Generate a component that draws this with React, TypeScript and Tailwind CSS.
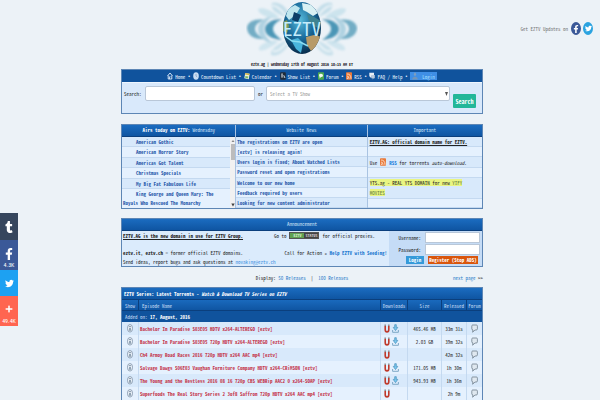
import type { ReactNode } from "react";
import { FaFacebookF, FaTwitter, FaTumblr, FaPlus } from "react-icons/fa";

const airing = ["American Gothic", "American Horror Story", "Americas Got Talent", "Christmas Specials", "My Big Fat Fabulous Life"];

const news = [
  "The registrations on EZTV are open",
  "[eztv] is releasing again!",
  "Users login is fixed; About Watched Lists",
  "Password reset and open registrations",
  "Welcome to our new home",
  "Feedback required by users",
  "Looking for new content administrator",
];

type Episode = { name: string; direct: boolean; size: string; age: string };

const episodes: Episode[] = [
  { name: "Bachelor In Paradise S03E05 HDTV x264-ALTEREGO [eztv]", direct: true, size: "465.46 MB", age: "33m 31s" },
  { name: "Bachelor In Paradise S03E05 720p HDTV x264-ALTEREGO [eztv]", direct: true, size: "2.03 GB", age: "39m 32s" },
  { name: "Ch4 Armoy Road Races 2016 720p HDTV x264 AAC mp4 [eztv]", direct: false, size: "", age: "42m 32s" },
  { name: "Salvage Dawgs S06E03 Vaughan Furniture Company HDTV x264-CRiMSON [eztv]", direct: true, size: "171.05 MB", age: "1h 30m" },
  { name: "The Young and the Restless 2016 08 16 720p CBS WEBRip AAC2 0 x264-SOAP [eztv]", direct: true, size: "943.93 MB", age: "1h 36m" },
  { name: "Superfoods The Real Story Series 2 3of8 Saffron 720p HDTV x264 AAC mp4 [eztv]", direct: false, size: "", age: "2h 9m" },
];

const bar = "bg-linear-to-b from-[#1b6cc0] to-[#0f55a2]";
const stripe = "odd:bg-[#d8e9fb] even:bg-[#e5f1fe]";

function Logo() {
  const wing = (
    <g>
      <path d="M18 20 C6 18 1 24 1 28 C1 34 7 40 18 39 C12 36 9 32 9 29 C9 25 12 22 18 20Z" fill="#4a96b4" opacity=".75" />
      <path d="M36 19 C25 19 19 24 19 29 C19 34 24 39 36 40 C30 36 27 32 27 29 C27 25 30 22 36 19Z" fill="#2f86aa" opacity=".85" />
      <path d="M29 15 C18 17 12 23 12 29 C12 36 18 42 28 44 C21 39 18 34 18 29 C18 24 22 19 29 15Z" fill="#7db8cf" opacity=".55" />
      <path d="M43 13 C38 4 31 1 26 3 C24 8 28 13 40 17Z" fill="#b3d6e4" opacity=".7" />
      <path d="M33 17 C24 9 16 7 12 9 C12 13 18 17 30 19Z" fill="#c4e0eb" opacity=".8" />
      <path d="M42 46 C36 54 30 57 25 55 C24 51 28 46 39 41Z" fill="#b3d6e4" opacity=".6" />
      <path d="M32 42 C24 48 17 52 13 50 C12 45 19 42 29 40Z" fill="#c4e0eb" opacity=".7" />
      <path d="M40 16 C34 7 28 5 26 6 M41 42 C35 50 30 52 27 51" fill="none" stroke="#ffffff" strokeWidth="1.5" opacity=".7" />
    </g>
  );
  return (
    <svg viewBox="0 0 112 60" className="h-[60px] w-[112px]" role="img" aria-label="EZTV">
      <defs>
        <radialGradient id="globe" cx=".45" cy=".35" r=".7">
          <stop offset="0" stopColor="#58bbdb" />
          <stop offset=".5" stopColor="#1b6c9c" />
          <stop offset="1" stopColor="#04223f" />
        </radialGradient>
        <clipPath id="disc">
          <ellipse cx="56" cy="28" rx="19" ry="26" />
        </clipPath>
        <filter id="soft">
          <feGaussianBlur stdDeviation=".9" />
        </filter>
      </defs>
      <g filter="url(#soft)">
        {wing}
        <g transform="translate(112 0) scale(-1 1)">{wing}</g>
      </g>
      <ellipse cx="56" cy="28" rx="19" ry="26" fill="url(#globe)" />
      <g clipPath="url(#disc)">
        <path d="M42 9 L49 5 L54 8 L51 13 L47 17 L43 20 L40 16Z" fill="#bfe6ef" />
        <path d="M56 3 L66 5 L72 13 L67 16 L61 12 L57 10Z" fill="#d9f1f4" />
        <path d="M37 22 L41 20 L43 26 L41 33 L37 31Z" fill="#7c9a58" />
        <path d="M60 37 L68 35 L76 37 L72 46 L65 51 L61 45Z" fill="#b79a67" />
        <path d="M61 14 L68 17 L75 21 L74 29 L68 26 L63 21Z" fill="#3f8391" />
        <path d="M45 40 L52 38 L57 43 L55 53 L50 49Z" fill="#49b5dc" />
        <path d="M48 12 L55 15 L52 22 L46 20Z" fill="#0d3d68" />
        <path d="M39 36 L46 41 L54 42 L62 46" stroke="#8adcf0" strokeWidth="1.5" fill="none" />
      </g>
      <text x="56" y="36" textAnchor="middle" fontSize="19" fontWeight="400" fontFamily="Noto Sans Mono CJK SC, Liberation Sans, sans-serif" fill="#c4ecfb">
        EZTV
      </text>
    </svg>
  );
}

function HomeIcon() {
  return (
    <svg viewBox="0 0 6 8" className="h-2 w-1.5" fill="none" stroke="#e3eefb" strokeWidth=".9">
      <path d="M.5 4 L3 1 L5.5 4 M1.2 3.6 V7 H4.8 V3.6 M2.4 7 V4.8 H3.6" />
    </svg>
  );
}
function ClockIcon() {
  return (
    <svg viewBox="0 0 6 8" className="h-2 w-1.5">
      <ellipse cx="3" cy="4" rx="2.8" ry="3.7" fill="#c9ddf3" />
      <path d="M3 2 V4 L4.2 5" stroke="#7c9cc0" strokeWidth=".7" fill="none" />
    </svg>
  );
}
function CalendarIcon() {
  return (
    <svg viewBox="0 0 6 8" className="h-2 w-1.5">
      <path d="M1.2 1 L5.6 1.8 L4.8 7.2 L.3 6.3Z" fill="#eef3e4" />
      <path d="M1.2 1 L5.6 1.8 L5.4 3.2 L1 2.4Z" fill="#d4b445" />
      <path d="M1.4 4 L4.4 4.6 L4 6.4 L1.1 5.8Z" fill="#7fba62" />
    </svg>
  );
}
function ShowIcon() {
  return (
    <svg viewBox="0 0 6 8" className="h-2 w-1.5">
      <rect x=".2" y=".3" width="5.6" height="7.4" rx=".8" fill="#1e2a38" />
      <path d="M1.2 2 H3 M1.2 4 H3 M2 2 V6 M3.6 5 H5 M3.6 3 L5 6" stroke="#dfe8f2" strokeWidth=".7" />
    </svg>
  );
}
function ForumIcon() {
  return (
    <svg viewBox="0 0 6 8" className="h-2 w-1.5">
      <rect y=".3" width="6" height="7.4" rx=".8" fill="#4ca950" />
      <path d="M1 3 Q1 1.8 3 1.8 Q5 1.8 5 3.4 Q5 5 3 5 L1.6 6.6 V4.8 Q1 4.4 1 3Z" fill="#f2fbf0" />
    </svg>
  );
}
function RssIcon() {
  return (
    <svg viewBox="0 0 6 8" className="inline-block h-2 w-1.5">
      <rect y=".3" width="6" height="7.4" rx=".8" fill="#e8793a" />
      <g fill="none" stroke="#ffe9d8" strokeWidth=".8">
        <path d="M1 4 Q3 4 3 6.8 M1 2 Q5 2 5 6.8" />
      </g>
      <circle cx="1.4" cy="6.2" r=".6" fill="#ffe9d8" />
    </svg>
  );
}
function HelpIcon() {
  return (
    <svg viewBox="0 0 6 8" className="h-2 w-1.5">
      <path d="M.3 .8 H5 V4.6 H2.2 L1 6 V4.6 H.3Z" fill="#e7eef6" />
      <path d="M2.2 3 H5.8 V6.2 H4.8 L3.6 7.6 V6.2 H2.2Z" fill="#b8c9dc" />
    </svg>
  );
}
function UserIcon() {
  return (
    <svg viewBox="0 0 6 8" className="h-2 w-1.5">
      <ellipse cx="3" cy="2.2" rx="1.1" ry="1.8" fill="#7e9dbd" />
      <path d="M0 7.6 Q.4 5 3 4.6 Q5.6 5 6 7.6Z" fill="#7395b8" />
    </svg>
  );
}
function InfoIcon() {
  return (
    <svg viewBox="0 0 6 9" className="h-[9px] w-1.5">
      <ellipse cx="3" cy="4.3" rx="2.5" ry="3.8" fill="#eef4fb" stroke="#7a8ea4" strokeWidth=".8" />
      <path d="M3 3.8 V6.8 M3 2 V3" stroke="#33536f" strokeWidth="1" />
    </svg>
  );
}
function MagnetIcon() {
  return (
    <svg viewBox="0 0 6 9" className="h-[9px] w-1.5" fill="none">
      <path d="M1.2 2 V5.4 Q1.2 7.9 3 7.9 Q4.8 7.9 4.8 5.4 V2" stroke="#bf3a2c" strokeWidth="1.6" />
      <path d="M.4 1.3 H2 M4 1.3 H5.6" stroke="#8f8f93" strokeWidth="1.5" />
    </svg>
  );
}
function DownloadIcon() {
  return (
    <svg viewBox="0 0 7 9" className="h-[9px] w-[7px]">
      <path d="M.6 6 V8.3 H6.4 V6" fill="none" stroke="#7fa9c6" strokeWidth="1" />
      <path d="M2.7 .7 H4.3 V3.4 H5.8 L3.5 6.6 L1.2 3.4 H2.7Z" fill="#7cc8ee" stroke="#3584b4" strokeWidth=".6" />
    </svg>
  );
}
function CommentIcon() {
  return (
    <svg viewBox="0 0 7 9" className="h-[9px] w-[7px]">
      <path d="M1.6 1 H5.4 Q6.4 1 6.4 2.2 V4.8 Q6.4 6 5.2 6 H4 L1.6 8.2 L2 6 Q.8 6 .8 4.8 V2.2 Q.8 1 1.6 1Z" fill="#dfe8f0" stroke="#6f7d8b" strokeWidth=".8" />
    </svg>
  );
}

const menu: { label: string; icon: ReactNode }[] = [
  { label: "Home", icon: <HomeIcon /> },
  { label: "Countdown List", icon: <ClockIcon /> },
  { label: "Calendar", icon: <CalendarIcon /> },
  { label: "Show List", icon: <ShowIcon /> },
  { label: "Forum", icon: <ForumIcon /> },
  { label: "RSS", icon: <RssIcon /> },
  { label: "FAQ / Help", icon: <HelpIcon /> },
];

function ShareBar() {
  return (
    <aside className="fixed top-[213px] left-0 flex w-[18px] flex-col font-['Roboto_Condensed','Roboto','Liberation_Sans',sans-serif] text-[6px] leading-[6px] font-normal text-white">
      <a href="#tumblr" aria-label="Tumblr" className="flex h-[27px] items-center justify-center bg-[#36465d]">
        <FaTumblr className="h-3 w-2" />
      </a>
      <a href="#facebook" className="flex h-[30px] flex-col items-center justify-end gap-px bg-[#3b5998] pb-0.5">
        <FaFacebookF className="h-3 w-2" />
        <span className="mt-px">4.3K</span>
      </a>
      <a href="#twitter" aria-label="Twitter" className="flex h-[26px] items-center justify-center bg-[#1da1f2]">
        <FaTwitter className="size-[9px]" />
      </a>
      <a href="#more" className="flex h-[30px] flex-col items-center justify-end gap-1 bg-[#ff6550] pb-0.5">
        <FaPlus className="size-2" />
        <span className="mt-px">49.4K</span>
      </a>
    </aside>
  );
}

function SearchPanel() {
  return (
    <section className="border border-[#5d86b5] bg-[#d9e9fb]">
      <nav className="flex h-3 items-center justify-center gap-[3px] bg-[#10539d] text-[#eaf3fd]">
        {menu.map((m) => (
          <span key={m.label} className="flex items-center gap-[3px]">
            <a href="#menu" className="flex items-center gap-0.5">
              {m.icon}
              {m.label}
            </a>
            <span className="font-['Liberation_Sans',sans-serif]">•</span>
          </span>
        ))}
        <a href="#login" className="flex h-2 items-center gap-1 bg-[#3f8fe6] px-0.5 text-[#a8e0ff]">
          <UserIcon />
          Login
        </a>
      </nav>
      <form className="flex h-[31px] items-start gap-[3px] border-t border-[#eef6ff] pt-[3px] pr-1.5 pl-0.5">
        <label htmlFor="q" className="pt-[3px]">Search:</label>
        <input id="q" className="h-[15px] min-w-0 flex-[105] rounded-xs border border-[#b9c7d8] bg-white px-1" />
        <label htmlFor="show" className="pt-[3px]">or</label>
        <span className="relative flex min-w-0 flex-[192]">
          <select id="show" className="h-[15px] w-full appearance-none rounded-xs border border-[#b9c7d8] bg-white px-[3px] text-[#999]">
            <option>Select a TV Show</option>
          </select>
          <svg viewBox="0 0 3 4" aria-hidden="true" className="pointer-events-none absolute top-1.5 right-0.5 h-1 w-[3px]">
            <path d="M0 0 H3 L1.5 4Z" fill="#555" />
          </svg>
        </span>
        <button type="button" className="mt-2 h-[14px] w-[23px] rounded-[1px] bg-[#22b799] text-center text-[6px] font-bold text-white">
          Search
        </button>
      </form>
    </section>
  );
}

function NewsPanel() {
  const head = `h-3 border-b border-[#0b3f7d] text-center font-medium text-[#cfe2f7] ${bar}`;
  return (
    <section className="mt-[10px] grid h-[85px] grid-cols-[115fr_132fr_115fr] border border-[#5d86b5] text-[#2b5bab]">
      <div className="border-r border-[#a9c3e2]">
        <h2 className={head}>
          <b className="text-white">Airs today on EZTV:</b> Wednesday
        </h2>
        <div className="flex">
          <ul className="flex h-[71px] flex-1 flex-col font-bold">
            {airing.map((s) => (
              <li key={s} className={`flex-1 border-b border-[#c4d9f0] pl-[14px] ${stripe}`}>
                <a href="#show">{s}</a>
              </li>
            ))}
            <li className="flex-[2] bg-[#e5f1fe] pl-px indent-[13px] leading-[9px]">
              <a href="#show">King George and Queen Mary: The Royals Who Rescued The Monarchy</a>
            </li>
          </ul>
          <div aria-hidden="true" className="flex h-[71px] w-[5px] flex-col items-center justify-between bg-[#f1f1f1]">
            <div className="flex w-full flex-col items-center">
              <svg viewBox="0 0 4 7" className="h-[7px] w-1"><path d="M.5 5 L2 3 L3.5 5Z" fill="#888" /></svg>
              <div className="h-4 w-1 bg-[#bcbcbc]" />
            </div>
            <svg viewBox="0 0 4 7" className="h-[7px] w-1"><path d="M.3 2.5 L2 5.5 L3.7 2.5Z" fill="#444" /></svg>
          </div>
        </div>
      </div>
      <div className="flex flex-col border-r border-[#a9c3e2]">
        <h2 className={head}>Website News</h2>
        <ul className="flex flex-1 flex-col font-bold">
          {news.map((n) => (
            <li key={n} className={`flex-1 border-b border-[#c4d9f0] pl-px ${stripe}`}>
              <a href="#news">{n}</a>
            </li>
          ))}
        </ul>
      </div>
      <div className="flex flex-col">
        <h2 className={head}>Important</h2>
        <ul className="flex flex-1 flex-col text-[#222] *:border-b *:border-[#c4d9f0] *:pl-0.5">
          <li className="h-[10px] bg-[#d8e9fb]">
            <a href="#domain" className="font-bold underline">EZTV.AG: official domain name for EZTV.</a>
          </li>
          <li className="h-[10px] bg-[#e5f1fe]" />
          <li className="flex h-[11px] items-center gap-[3px] bg-[#d8e9fb]">
            Use <RssIcon />
            <span>
              <a href="#rss" className="font-bold text-[#1f7fdc]">RSS</a> for torrents <i>auto-download</i>.
            </span>
          </li>
          <li className="h-[10px] bg-[#e5f1fe]" />
          <li className="h-[21px] bg-[#d8e9fb] pr-1 leading-[10px]">
            <mark className="bg-[#e9f582] text-[#222]">
              YTS.ag - REAL YTS DOMAIN for new <a href="#yify" className="text-[#5d7a3c]">YIFY MOVIES</a>
            </mark>
          </li>
          <li className="flex-1 bg-[#e5f1fe]" />
        </ul>
      </div>
    </section>
  );
}

function Announcement() {
  const box = "h-[11px] w-[55px] border border-[#b9c7d8] bg-white px-1";
  return (
    <section className="mt-[9px] border border-[#5d86b5] bg-[#dbebfc]">
      <h2 className={`h-3 border-b border-[#0b3f7d] text-center text-[#cfe2f7] ${bar}`}>Announcement</h2>
      <div className="flex">
        <div className="flex flex-1 flex-col pl-px leading-[9px]">
          <p className="flex justify-between pr-[14px]">
            <b className="underline">EZTV.AG is the new domain in use for EZTV Group.</b>
            <span className="flex items-center gap-[3px]">
              Go to
              <a href="#status" className="flex h-[7px] w-[30px] border border-[#555] text-[4px] leading-[5px] font-bold">
                <span className="flex-1 bg-[#5fa052] text-center text-[#d5efc9]">EZTV</span>
                <span className="flex-1 bg-[#444] text-center text-[#ccc]">STATUS</span>
              </a>
              for official proxies.
            </span>
          </p>
          <p className="mt-2 flex justify-between pr-0.5">
            <span><b>eztv.it</b>, <b>eztv.ch</b> = former official EZTV domains.</span>
            <span>Call for Action » <a href="#seed" className="font-bold text-[#1b78cf]">Help EZTV with Seeding!</a></span>
          </p>
          <p>
            Send ideas, report bugs and ask questions at <a href="#mail" className="text-[#3d8fe0]">novaking@eztv.ch</a>
          </p>
        </div>
        <form className="flex w-[93px] flex-col items-end gap-px bg-[#c5dcf6] pt-px pr-0.5 pb-0.5">
          <div className="flex items-center gap-1">
            <label htmlFor="user">Username:</label>
            <input id="user" className={box} />
          </div>
          <div className="flex items-center gap-1">
            <label htmlFor="pass">Password:</label>
            <input id="pass" type="password" className={box} />
          </div>
          <div className="flex gap-1 pr-0.5 font-bold text-white">
            <button type="button" className="h-2 w-[18px] bg-[#359ad9] leading-2">Login</button>
            <button type="button" className="h-2 w-[50px] bg-[#d9550c] leading-2">Register (Stop ADS)</button>
          </div>
        </form>
      </div>
    </section>
  );
}

function Torrents() {
  const th = "h-[11px] border-t border-r border-[#0b3f7d] p-0 font-normal last:border-r-0";
  const td = "border-r border-[#c4d9f0] p-0 last:border-r-0";
  return (
    <table className="w-full table-fixed border-separate border-spacing-0 border border-[#5d86b5] text-center">
      <colgroup>
        <col className="w-[17px]" />
        <col />
        <col className="w-[27px]" />
        <col className="w-[34px]" />
        <col className="w-[25px]" />
        <col className="w-[15px]" />
      </colgroup>
      <thead className="text-[#c3daf3]">
        <tr className={bar}>
          <th colSpan={6} className="h-[11px] p-0 pl-0.5 text-left font-bold text-white">
            EZTV Series: Latest Torrents - <i>Watch & Download TV Series on EZTV</i>
          </th>
        </tr>
        <tr className={bar}>
          <th className={th}>Show</th>
          <th className={`${th} pl-[3px] text-left`}>Episode Name</th>
          <th className={th}>Downloads</th>
          <th className={th}>Size</th>
          <th className={th}>Released</th>
          <th className={th}>Forum</th>
        </tr>
        <tr className="bg-[#10539d]">
          <td colSpan={6} className="h-3 border-t border-[#0b3f7d] p-0 pl-[3px] text-left">
            Added on: <b className="text-white">17, August, 2016</b>
          </td>
        </tr>
      </thead>
      <tbody className="text-[#222]">
        {episodes.map((e) => (
          <tr key={e.name} className={`h-[13px] ${stripe}`}>
            <td className={td}><a href="#info" aria-label="Show info" className="flex justify-center"><InfoIcon /></a></td>
            <td className={`${td} pl-px text-left`}><a href="#episode" className="font-bold text-[#c4384f]">{e.name}</a></td>
            <td className={td}>
              <span className="flex gap-0.5 pl-[3px]">
                <a href="#magnet" aria-label="Magnet link"><MagnetIcon /></a>
                {e.direct && <a href="#download" aria-label="Download"><DownloadIcon /></a>}
              </span>
            </td>
            <td className={td}>{e.size}</td>
            <td className={td}>{e.age}</td>
            <td className={td}><a href="#comments" aria-label="Comments" className="flex justify-center"><CommentIcon /></a></td>
          </tr>
        ))}
      </tbody>
    </table>
  );
}

export default function App() {
  return (
    <div className="min-h-screen bg-[#ecf2f7] font-['Noto_Sans_Mono_CJK_SC','Liberation_Mono',monospace] text-[5px] leading-[9px] font-medium text-[#222]">
      <ShareBar />
      <div className="absolute top-[22px] right-[7px] flex items-center gap-[3px] text-[#777]">
        Get EZTV Updates on
        <a href="#facebook" aria-label="Facebook" className="flex h-[13px] w-[10px] items-center justify-center rounded-[50%] bg-[#3b5998] text-white">
          <FaFacebookF className="size-2" />
        </a>
        <a href="#twitter" aria-label="Twitter" className="-ml-px flex h-[13px] w-[10px] items-center justify-center rounded-[50%] bg-[#2ba3e0] text-white">
          <FaTwitter className="size-[7px]" />
        </a>
      </div>
      <main className="ml-1">
        <div className="mx-auto max-w-[362px]">
          <header className="flex flex-col items-center">
            <Logo />
            <p className="text-[4px] font-bold">eztv.ag | Wednesday 17th of August 2016 10:15 AM ET</p>
          </header>
          <SearchPanel />
          <NewsPanel />
          <Announcement />
          <div className="flex items-center pt-1.5 pb-[5px]">
            <span className="flex-1" />
            <p className="flex gap-[5px]">
              <span>Display: <a href="#50" className="text-[#2b7cc9]">50 Releases</a></span>
              <span>|</span>
              <a href="#100" className="text-[#2b7cc9]">100 Releases</a>
            </p>
            <p className="flex-1 text-right"><a href="#next" className="text-[#2b7cc9]">next page</a> &gt;&gt;</p>
          </div>
          <Torrents />
        </div>
      </main>
    </div>
  );
}
